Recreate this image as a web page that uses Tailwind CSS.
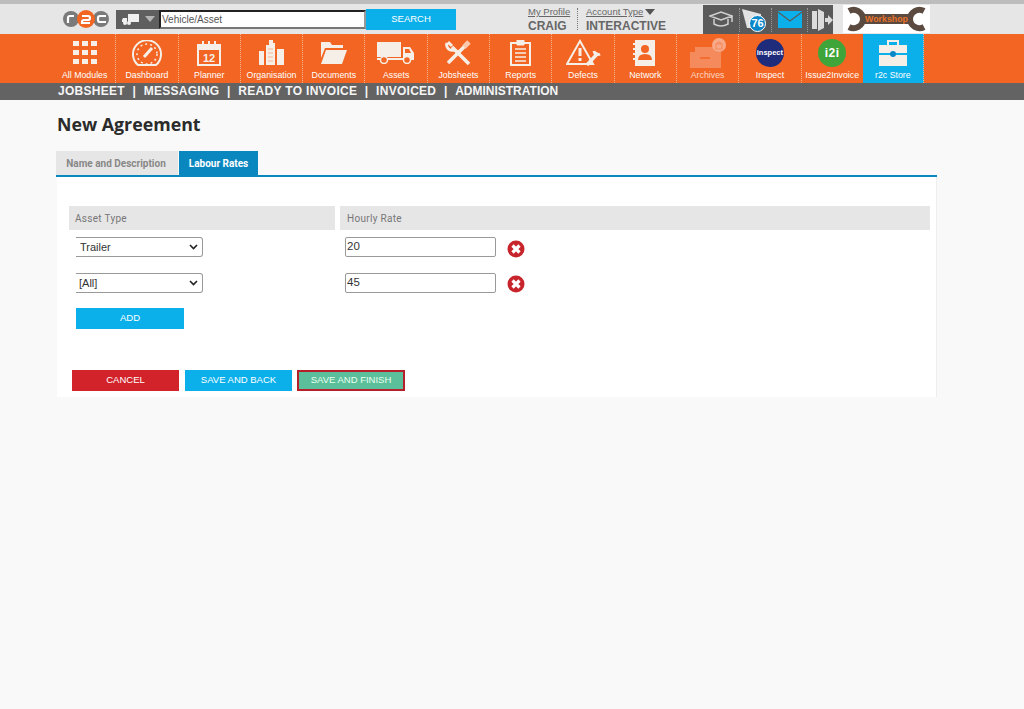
<!doctype html>
<html>
<head>
<meta charset="UTF-8" />
<script src="https://cdn.jsdelivr.net/npm/@tailwindcss/browser@4"></script>
<title>New Agreement</title>
</head>
<body class="bg-[#f9f9f9] font-['Liberation_Sans',Arial,sans-serif] h-[709px] overflow-hidden">

<!-- top bar -->
<div class="h-[4px] bg-[#bdbdbd]"></div>
<header class="h-[30px] bg-[#e6e6e6] flex items-center pl-[62px]">
  <div class="w-[48px] h-[18px] flex items-center">
    <svg width="48" height="18" viewBox="0 0 48 18">
      <circle cx="9" cy="9" r="8" fill="#7a7a7a"/><circle cx="39" cy="9" r="8" fill="#7a7a7a"/><circle cx="24" cy="9" r="9" fill="#f26522"/>
      <path d="M6 13V8q0-2 2-2h4M20 6h6q2 0 2 2t-2 2h-4q-2 0-2 2v1h8M44 6h-6q-2 0-2 2v2q0 2 2 2h6" fill="none" stroke="#fff" stroke-width="2.2"/>
    </svg>
  </div>
  <div class="ml-[6px] w-[43px] h-[19px] bg-[#5f5f5f] flex items-center pl-[6px] gap-[6px]">
    <svg width="17" height="11" viewBox="0 0 17 11" fill="#f0f0f0"><path d="M6 0h11v8H6zM1 4h4v4H0V6z"/><circle cx="3" cy="9" r="2"/><circle cx="7" cy="9" r="2"/></svg>
    <span class="w-0 h-0 border-x-[5px] border-x-transparent border-t-[6px] border-t-[#b5b5b5]"></span>
  </div>
  <div class="w-[207px] h-[19px] bg-white border-2 border-[#222] border-b-[#777] border-r-[#999] text-[10px] leading-[15px] pl-[1px] text-[#555]">Vehicle/Asset</div>
  <div class="w-[90px] h-[21px] bg-[#0bb0ea] text-white text-[9.5px] flex items-center justify-center">SEARCH</div>
  <div class="ml-[72px] w-[50px] text-[#666] leading-none pt-[1px]">
    <div class="text-[9.5px] underline">My Profile</div>
    <div class="text-[12px] font-bold mt-[3px]">CRAIG</div>
  </div>
  <div class="h-[22px] border-l border-dotted border-[#777] ml-[-1px]"></div>
  <div class="ml-[8px] w-[117px] text-[#666] leading-none pt-[1px]">
    <div class="text-[9.5px] flex items-center gap-[2px]"><span class="underline">Account Type</span><span class="w-0 h-0 border-x-[5px] border-x-transparent border-t-[6px] border-t-[#555]"></span></div>
    <div class="text-[12px] font-bold mt-[3px]">INTERACTIVE</div>
  </div>
  <div class="w-[130px] h-[29px] mt-[1px] bg-[#5a5a5a] flex items-center">
    <div class="w-[36px] flex justify-center">
      <svg width="24" height="17" viewBox="0 0 24 17" fill="none" stroke="#d0d0d0" stroke-width="1.5"><path d="M1 5l11-4 11 4-11 4zM5 8v5q7 4 14 0V8M23 5v6"/></svg>
    </div>
    <div class="w-[32px] h-[24px] relative border-l border-dotted border-[#999]">
      <svg width="20" height="22" viewBox="0 0 20 22" class="ml-[1px]"><path d="M1 1l19 5v14H6z" fill="#e2e2e2"/></svg>
      <span class="absolute left-[9px] top-[7px] w-[17px] h-[17px] rounded-full bg-[#0b87c9] border border-white text-white text-[11px] font-bold leading-[15px] text-center">76</span>
    </div>
    <div class="w-[36px] h-[24px] flex items-center justify-center border-l border-dotted border-[#999]">
      <svg width="24" height="17" viewBox="0 0 24 17"><path fill="#0bb0ea" d="M0 0h24v17H0z"/><path d="M0 1l12 9 12-9" fill="none" stroke="#5a5a5a" stroke-width="1.2"/></svg>
    </div>
    <div class="w-[26px] h-[24px] flex items-center border-l border-dotted border-[#999] pl-[3px]">
      <svg width="22" height="24" viewBox="0 0 22 24" fill="#dcdcdc"><path d="M1 3h5v18H1zM7 1l6 3v16l-6 3z"/><path d="M14 10h3V7l5 5-5 5v-3h-3z"/></svg>
    </div>
  </div>
  <div class="ml-[10px] w-[87px] h-[28px] bg-white flex items-center justify-center">
    <svg width="85" height="26" viewBox="0 0 85 26" fill="none">
      <path d="M5 5a9.500 9.500 0 0 1 14 8a9.500 9.500 0 0 1-14 8" stroke="#5b4a40" stroke-width="6"/>
      <path d="M80 5a9.500 9.500 0 0 0-14 8a9.500 9.500 0 0 0 14 8" stroke="#5b4a40" stroke-width="6"/>
      <path d="M18 8h49v10H18z" fill="#5b4a40"/>
      <text x="42.500" y="16" text-anchor="middle" font-size="8.800" font-weight="700" fill="#e9722a" font-family="Liberation Sans">Workshop</text>
    </svg>
  </div>
</header>

<!-- modules -->
<nav class="h-[49px] bg-[#f26522] flex pl-[54px] text-white text-[8.8px]">
  <a class="w-[62.3px] flex flex-col items-center border-r border-dotted border-[#f7b48f]">
    <div class="h-[35px] flex items-center pt-[2px]"><svg width="24" height="24" viewBox="0 0 24 24" fill="#f5efe8"><path d="M0 0h6v5H0zM9 0h6v5H9zM18 0h6v5h-6zM0 9h6v5H0zM9 9h6v5H9zM18 9h6v5h-6zM0 18h6v5H0zM9 18h6v5H9zM18 18h6v5h-6z"/></svg></div>
    <span class="leading-[13px]">All Modules</span>
  </a>
  <a class="w-[62.3px] flex flex-col items-center border-r border-dotted border-[#f7b48f]">
    <div class="h-[35px] flex items-center pt-[2px]"><svg width="30" height="26" viewBox="0 0 30 26" fill="none" stroke="#f5efe8" stroke-width="2"><path d="M6 25a14 14 0 1 1 18 0z"/><circle cx="15" cy="14" r="10" stroke-width="1.500" stroke-dasharray="2 3"/><path d="M12 17l8-9" stroke-width="3"/></svg></div>
    <span class="leading-[13px]">Dashboard</span>
  </a>
  <a class="w-[62.3px] flex flex-col items-center border-r border-dotted border-[#f7b48f]">
    <div class="h-[35px] flex items-center pt-[2px]"><svg width="26" height="26" viewBox="0 0 26 26"><path d="M2 5h22v20H2z" fill="none" stroke="#f5efe8" stroke-width="2"/><path d="M1 5h24v5H1z" fill="#f5efe8"/><path d="M7 1v6M13 1v6M19 1v6" stroke="#f5efe8" stroke-width="2"/><text x="13" y="22" text-anchor="middle" font-size="11" font-weight="700" fill="#f5efe8" font-family="Liberation Sans">12</text></svg></div>
    <span class="leading-[13px]">Planner</span>
  </a>
  <a class="w-[62.3px] flex flex-col items-center border-r border-dotted border-[#f7b48f]">
    <div class="h-[35px] flex items-center pt-[2px]"><svg width="25" height="25" viewBox="0 0 25 25" fill="#f5efe8"><path d="M0 11h5v14H0zM7 5h3V0h4v3h2v22H7zM18 9h7v16h-7z"/><path d="M9 9h5M9 13h5M9 17h5M9 21h5" stroke="#f9b48f"/></svg></div>
    <span class="leading-[13px]">Organisation</span>
  </a>
  <a class="w-[62.3px] flex flex-col items-center border-r border-dotted border-[#f7b48f]">
    <div class="h-[35px] flex items-center pt-[2px]"><svg width="27" height="22" viewBox="0 0 27 22" fill="#f5efe8"><path d="M1 0h9l2 3h11v3H5L1 16zM6 8h21l-5 14H1z"/></svg></div>
    <span class="leading-[13px]">Documents</span>
  </a>
  <a class="w-[62.3px] flex flex-col items-center border-r border-dotted border-[#f7b48f]">
    <div class="h-[35px] flex items-center pt-[2px]"><svg width="38" height="22" viewBox="0 0 38 22" fill="#f5efe8"><path d="M0 0h24v15H0zM26 5h7l4 6v6H26zM0 16h37v2H0z"/><path d="M28 7h4l2 4h-6z" fill="#f26522"/><circle cx="7" cy="18" r="3.500" fill="#f26522" stroke="#f5efe8" stroke-width="1.500"/><circle cx="30" cy="18" r="3.500" fill="#f26522" stroke="#f5efe8" stroke-width="1.500"/></svg></div>
    <span class="leading-[13px]">Assets</span>
  </a>
  <a class="w-[62.3px] flex flex-col items-center border-r border-dotted border-[#f7b48f]">
    <div class="h-[35px] flex items-center pt-[2px]"><svg width="26" height="26" viewBox="0 0 26 26" fill="none" stroke="#f5efe8"><path d="M7 7l17 17" stroke-width="3.500"/><path d="M2 3a5.500 5.500 0 0 0 7 7M3 2l4 4" stroke-width="3"/><path d="M20 6L3 23" stroke-width="3.500"/><path d="M19 7l5-5" stroke-width="5" stroke="#f9c9ae"/></svg></div>
    <span class="leading-[13px]">Jobsheets</span>
  </a>
  <a class="w-[62.3px] flex flex-col items-center border-r border-dotted border-[#f7b48f]">
    <div class="h-[35px] flex items-center pt-[2px]"><svg width="21" height="26" viewBox="0 0 21 26" fill="none" stroke="#f5efe8"><path d="M1 3h19v22H1z" stroke-width="2"/><path d="M7 0h7v5H7z" fill="#f5efe8"/><path d="M5 9h11M5 13h11M5 17h11M5 21h11" stroke-width="1.500"/></svg></div>
    <span class="leading-[13px]">Reports</span>
  </a>
  <a class="w-[62.3px] flex flex-col items-center border-r border-dotted border-[#f7b48f]">
    <div class="h-[35px] flex items-center pt-[2px]"><svg width="35" height="27" viewBox="0 0 35 27" fill="none" stroke="#f5efe8"><path d="M14 2L1 25h26z" stroke-width="2"/><path d="M14 9v8M14 19v3" stroke-width="3"/><path d="M21 26l11-12" stroke-width="3.500"/><path d="M28 12a4 4 0 0 0 6 3" stroke-width="3"/></svg></div>
    <span class="leading-[13px]">Defects</span>
  </a>
  <a class="w-[62.3px] flex flex-col items-center border-r border-dotted border-[#f7b48f]">
    <div class="h-[35px] flex items-center pt-[2px]"><svg width="24" height="26" viewBox="0 0 24 26"><path d="M2 0h20v26H2z" fill="#f5efe8"/><circle cx="12" cy="9" r="4" fill="#f26522"/><path d="M5 20q0-6 7-6t7 6z" fill="#f26522"/><path d="M0 4h4M0 9h4M0 14h4M0 19h4" stroke="#f5efe8" stroke-width="2"/></svg></div>
    <span class="leading-[13px]">Network</span>
  </a>
  <a class="w-[62.3px] flex flex-col items-center border-r border-dotted border-[#f7b48f]">
    <div class="h-[35px] flex items-center pt-[2px]"><svg width="36" height="30" viewBox="0 0 36 30"><path d="M5 9h22v6H5zM0 14h31v16H0z" fill="#f58a5c"/><path d="M10 20h10" stroke="#f26522" stroke-width="1.500"/><circle cx="29" cy="7" r="7" fill="#f7a988"/><path d="M26 6h6v5h-6zM27 6q2-4 4 0" fill="none" stroke="#f58a5c" stroke-width="1.200"/></svg></div>
    <span class="leading-[13px] text-[#fbd5c2]">Archives</span>
  </a>
  <a class="w-[62.3px] flex flex-col items-center border-r border-dotted border-[#f7b48f]">
    <div class="h-[35px] flex items-center pt-[2px]"><span class="w-[28px] h-[28px] rounded-full bg-[#1f2c7c] text-white text-[7.5px] font-bold flex items-center justify-center">inspect</span></div>
    <span class="leading-[13px]">Inspect</span>
  </a>
  <a class="w-[61.3px] flex flex-col items-center">
    <div class="h-[35px] flex items-center pt-[2px]"><span class="w-[28px] h-[28px] rounded-full bg-[#3fa53a] text-white text-[12px] font-bold flex items-center justify-center tracking-[0.5px]">i2i</span></div>
    <span class="leading-[13px] whitespace-nowrap">Issue2Invoice</span>
  </a>
  <a class="w-[61px] bg-[#0bb0ea] flex flex-col items-center border-r border-dotted border-[#f7b48f]">
    <div class="h-[35px] flex items-center pt-[2px]"><svg width="28" height="26" viewBox="0 0 28 26"><path d="M9 5V1h10v4" fill="none" stroke="#f5efe8" stroke-width="2"/><path d="M0 5h28v8H0zM0 15h28v11H0z" fill="#f5efe8"/><circle cx="14" cy="14" r="3" fill="#0b87c9"/></svg></div>
    <span class="leading-[13px]">r2c Store</span>
  </a>
</nav>

<!-- sub menu -->
<div class="h-[17px] bg-[#636363] text-[#f5f5f5] text-[12px] font-bold leading-[16px] pl-[58px] tracking-[0.27px] [word-spacing:0.2px] whitespace-pre">JOBSHEET  |  MESSAGING  |  READY TO INVOICE  |  INVOICED  |  <span class="tracking-normal">ADMINISTRATION</span></div>

<main class="ml-[56px] w-[881px]">
  <h1 class="ml-[1px] mt-[13px] text-[17.8px] leading-[22px] font-bold text-[#2b2b2b] font-['Open_Sans',sans-serif]">New Agreement</h1>

  <div class="mt-[16px] flex gap-[1px] border-b-2 border-[#0b87bf] h-[26px] font-bold font-['Roboto',sans-serif] text-[10px]">
    <div class="w-[122px] h-[24px] bg-[#e6e6e6] text-[#888] flex items-center justify-center pr-[2px]">Name and Description</div>
    <div class="w-[79px] h-[24px] bg-[#0b87bf] text-white flex items-center justify-center">Labour Rates</div>
  </div>

  <section class="ml-[1px] bg-white h-[220px] border-r border-[#eeeeee] pt-[29px] pl-[12px] pr-[6px]">
    <div class="flex gap-[5px] h-[24px] text-[10px] text-[#777] font-['Roboto',sans-serif] tracking-[0.3px]">
      <div class="w-[266px] bg-[#e6e6e6] flex items-center pl-[6px]">Asset Type</div>
      <div class="w-[590px] bg-[#e6e6e6] flex items-center pl-[7px]">Hourly Rate</div>
    </div>

    <div class="mt-[7px] flex items-start h-[20px]">
      <div class="ml-[7px] w-[127px] h-[20px] bg-white border border-[#999] border-l-0 rounded-r-[3px] flex items-center justify-between pl-[4px] pr-[4px] text-[11px] text-[#333]">Trailer
        <svg width="9" height="6" viewBox="0 0 9 6" fill="none" stroke="#222" stroke-width="1.6"><path d="M1 1l3.500 3.500L8 1"/></svg>
      </div>
      <div class="ml-[142px] w-[151px] h-[20px] bg-white border border-[#999] rounded-[2px] flex items-center pl-[1px] text-[11.500px] text-[#333]">20</div>
      <svg class="ml-[11px] mt-[3px]" width="18" height="18" viewBox="0 0 18 18"><circle cx="9" cy="9" r="8.500" fill="#c8242c"/><path d="M5.500 5.500l7 7M12.500 5.500l-7 7" stroke="#fff" stroke-width="3.200"/></svg>
    </div>

    <div class="mt-[16px] flex items-start h-[20px]">
      <div class="ml-[7px] w-[127px] h-[20px] bg-white border border-[#999] border-l-0 rounded-r-[3px] flex items-center justify-between pl-[3px] pr-[4px] text-[11px] text-[#333]">[All]
        <svg width="9" height="6" viewBox="0 0 9 6" fill="none" stroke="#222" stroke-width="1.6"><path d="M1 1l3.500 3.500L8 1"/></svg>
      </div>
      <div class="ml-[142px] w-[151px] h-[20px] bg-white border border-[#999] rounded-[2px] flex items-center pl-[1px] text-[11.500px] text-[#333]">45</div>
      <svg class="ml-[11px] mt-[2px]" width="18" height="18" viewBox="0 0 18 18"><circle cx="9" cy="9" r="8.500" fill="#c8242c"/><path d="M5.500 5.500l7 7M12.500 5.500l-7 7" stroke="#fff" stroke-width="3.200"/></svg>
    </div>

    <button class="block ml-[7px] mt-[15px] w-[108px] h-[21px] bg-[#0bb0ea] text-white text-[9.5px]">ADD</button>

    <div class="mt-[41px] ml-[3px] flex gap-[6px] text-[9.5px] text-white">
      <button class="w-[107px] h-[21px] bg-[#d2232a]">CANCEL</button>
      <button class="w-[107px] h-[21px] bg-[#0bb0ea]">SAVE AND BACK</button>
      <button class="ml-[-1px] w-[108px] h-[21px] bg-[#5cbf9b] border-2 border-[#b5202a] text-[#eafff0]">SAVE AND FINISH</button>
    </div>
  </section>
</main>
</body>
</html>
